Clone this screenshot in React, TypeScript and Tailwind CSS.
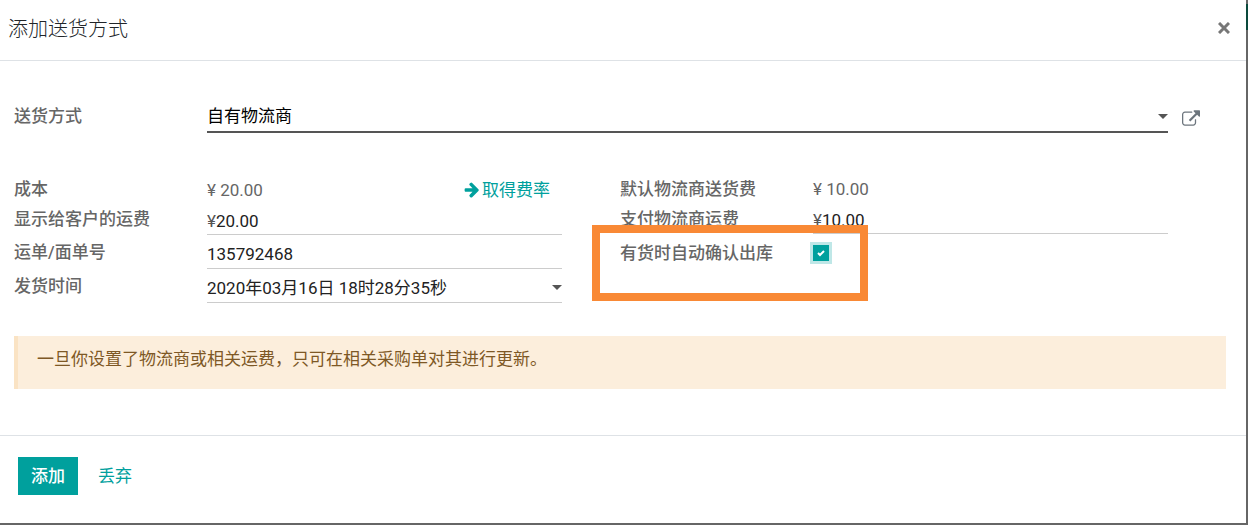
import { useState } from "react";
import type { ReactNode } from "react";

function Caret() {
  return (
    <svg viewBox="0 0 10 5" className="h-[5px] w-2.5 shrink-0 fill-[#555]" aria-hidden="true">
      <path d="M0 0h10L5 5z" />
    </svg>
  );
}

function ArrowRight() {
  return (
    <svg viewBox="0 128 1536 1664" className="h-4 w-4 shrink-0 fill-[#00a09d]" aria-hidden="true">
      <path d="M1472 960q0 54-37 91l-651 651q-39 37-91 37-51 0-90-37l-75-75q-38-38-38-91t38-91l293-293H117q-52 0-84.5-37.5T0 1024V896q0-53 32.5-90.5T117 768h704L528 474q-38-36-38-90t38-90l75-75q38-38 90-38 53 0 91 38l651 651q37 35 37 90z" />
    </svg>
  );
}

function ExternalLink() {
  return (
    <svg viewBox="0 0 1792 1536" className="h-4 w-[18px] fill-[#6c757d]" aria-hidden="true">
      <path d="M1408 928v320q0 119-84.5 203.5t-203.5 84.5h-832q-119 0-203.5-84.5t-84.5-203.5v-832q0-119 84.5-203.5t203.5-84.5h704q14 0 23 9t9 23v64q0 14-9 23t-23 9h-704q-66 0-113 47t-47 113v832q0 66 47 113t113 47h832q66 0 113-47t47-113v-320q0-14 9-23t23-9h64q14 0 23 9t9 23zm384-864v512q0 26-19 45t-45 19-45-19l-176-176-652 652q-10 10-23 10t-23-10l-114-114q-10-10-10-23t10-23l652-652-176-176q-19-19-19-45t19-45 45-19h512q26 0 45 19t19 45z" />
    </svg>
  );
}

type RowProps = {
  label: string;
  htmlFor?: string;
  className: string;
  children: ReactNode;
};

function Row({ label, htmlFor, className, children }: RowProps) {
  return (
    <div className={`flex ${className}`}>
      <label htmlFor={htmlFor} className="flex w-[193px] shrink-0 items-center font-medium text-[#666]">
        {label}
      </label>
      {children}
    </div>
  );
}

const fieldClass = "flex min-w-0 flex-1 items-center border-b border-[#ccc] pt-1 text-[#222]";
const inputClass = "w-full min-w-0 flex-1 bg-transparent p-0 outline-none";

export default function App() {
  const [price, setPrice] = useState("20.00");
  const [paid, setPaid] = useState("10.00");
  const [tracking, setTracking] = useState("135792468");
  const [shipDate, setShipDate] = useState("2020年03月16日 18时28分35秒");
  const [autoConfirm, setAutoConfirm] = useState(true);

  return (
    <div className="flex bg-[#666] pb-0.5 font-[Roboto,'Noto_Sans_CJK_SC',sans-serif] text-[17px] leading-6">
      <div role="dialog" aria-labelledby="dialog-title" className="min-w-0 flex-1 bg-white">
        {/* Header */}
        <header className="flex h-[61px] items-center justify-between border-b border-[#dee2e6] pr-[15px] pb-1 pl-2">
          <h4 id="dialog-title" className="pt-0.5 text-xl font-light text-[#212529]">添加送货方式</h4>
          <button type="button" aria-label="关闭" className="flex h-4 w-3.5 items-center justify-center">
            <svg viewBox="0 0 12 12" className="h-3 w-3" aria-hidden="true">
              <path d="M1 1l10 10M11 1l-10 10" stroke="#777" strokeWidth="3" />
            </svg>
          </button>
        </header>

        {/* Body */}
        <main className="pt-[38px] pr-5 pb-[46px] pl-3.5">
          <div className="flex items-center">
            <Row label="送货方式" htmlFor="carrier" className="h-[34px] min-w-0 flex-1">
              <div className="flex min-w-0 flex-1 items-center border-b-2 border-[#555] pt-0.5 text-black">
                <select id="carrier" className="w-full flex-1 appearance-none bg-transparent p-0 outline-none">
                  <option>自有物流商</option>
                </select>
                <Caret />
              </div>
            </Row>
            <button type="button" aria-label="打开物流商" className="mt-1 mr-[26px] ml-3.5">
              <ExternalLink />
            </button>
          </div>

          <div className="mt-[42px] mr-[58px] grid grid-cols-2 gap-x-[58px]">
            <div>
              <Row label="成本" className="h-7">
                <div className="flex flex-1 items-center justify-between pt-0.5 text-[#666]">
                  <span>¥ 20.00</span>
                  <button type="button" className="mr-3 flex items-center gap-0.5 text-[#00a09d]">
                    <ArrowRight />
                    取得费率
                  </button>
                </div>
              </Row>
              <Row label="显示给客户的运费" htmlFor="price" className="h-8">
                <div className={fieldClass}>
                  <span className="text-[#555]">¥</span>
                  <input id="price" value={price} onChange={(e) => setPrice(e.target.value)} className={inputClass} />
                </div>
              </Row>
              <Row label="运单/面单号" htmlFor="tracking" className="h-[34px]">
                <div className={fieldClass}>
                  <input id="tracking" value={tracking} onChange={(e) => setTracking(e.target.value)} className={inputClass} />
                </div>
              </Row>
              <Row label="发货时间" htmlFor="ship-date" className="h-[34px]">
                <div className={fieldClass}>
                  <input id="ship-date" value={shipDate} onChange={(e) => setShipDate(e.target.value)} className={inputClass} />
                  <Caret />
                </div>
              </Row>
            </div>

            <div>
              <Row label="默认物流商送货费" className="h-7">
                <span className="flex flex-1 items-center text-[#666]">¥ 10.00</span>
              </Row>
              <Row label="支付物流商运费" htmlFor="paid" className="h-[31px]">
                <div className={fieldClass}>
                  <span className="text-[#555]">¥</span>
                  <input id="paid" value={paid} onChange={(e) => setPaid(e.target.value)} className={inputClass} />
                </div>
              </Row>
              <Row label="有货时自动确认出库" htmlFor="auto-confirm" className="relative h-[37px]">
                <div className="grid place-items-center">
                  <input
                    id="auto-confirm"
                    type="checkbox"
                    checked={autoConfirm}
                    onChange={(e) => setAutoConfirm(e.target.checked)}
                    className="col-start-1 row-start-1 h-4 w-4 appearance-none border border-[#00a09d] ring-3 ring-[#bfe7e7] checked:bg-[#00a09d]"
                  />
                  <svg viewBox="0 0 8 8" className="pointer-events-none col-start-1 row-start-1 h-2 w-2" aria-hidden="true">
                    <path d="M1 4l2 2 4-4" fill="none" stroke="#fff" strokeWidth="2" />
                  </svg>
                </div>
                {/* Highlight frame */}
                <div className="pointer-events-none absolute -top-[9px] -left-7 h-[76px] w-[276px] border-8 border-[#f98935]" />
              </Row>
            </div>
          </div>

          <div role="alert" className="mt-[33px] border-l-4 border-[#fae3c4] bg-[#fceedc] pt-[11px] pr-5 pb-[18px] pl-[19px] text-[#7e5825]">
            一旦你设置了物流商或相关运费，只可在相关采购单对其进行更新。
          </div>
        </main>

        {/* Footer */}
        <footer className="flex items-start gap-2 border-t border-[#dee2e6] px-[18px] pt-[21px] pb-7">
          <button type="button" className="bg-[#00a09d] px-[13px] py-[7px] font-medium text-white">添加</button>
          <button type="button" className="px-3 py-[7px] text-[#00a09d]">丢弃</button>
        </footer>
      </div>

      {/* Page edge behind the dialog */}
      <div className="w-0.5 pt-1">
        <div className="h-[26px] bg-[#0a4a3c]" />
      </div>
    </div>
  );
}
